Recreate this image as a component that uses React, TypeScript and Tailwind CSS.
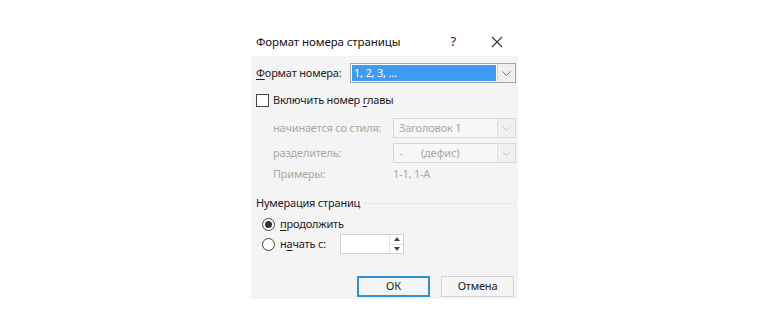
import React from 'react';

const font = { fontFamily: '"Noto Sans", "Open Sans", sans-serif' };

const Chevron: React.FC<{ color?: string }> = ({ color = '#7a7a7a' }) => (
  <svg width="9" height="5" viewBox="0 0 9 5" fill="none">
    <path d="M0.5 0.5 L4.5 4.5 L8.5 0.5" stroke={color} strokeWidth="1" />
  </svg>
);

const DisabledCombo: React.FC<{ children: React.ReactNode }> = ({ children }) => (
  <div className="flex h-[20px] w-[123px] flex-none items-stretch border border-[#d9d9d9] bg-[#f7f7f7]">
    <div className="flex flex-1 items-center whitespace-nowrap pl-[5px] text-[#a8a8a8]">{children}</div>
    <div className="flex w-[18px] items-center justify-center border-l border-[#e0e0e0] bg-[#f0f0f0]">
      <Chevron color="#c8c8c8" />
    </div>
  </div>
);

const Radio: React.FC<{ checked?: boolean }> = ({ checked }) => (
  <span className="flex h-[13px] w-[13px] flex-none items-center justify-center rounded-full border border-[#444] bg-white">
    {checked && <span className="h-[7px] w-[7px] rounded-full bg-[#333]" />}
  </span>
);

export default function App() {
  return (
    <div
      className="h-[330px] w-full whitespace-nowrap bg-white pl-[251px] pt-[28px] text-[11px] tracking-[-0.2px] text-[#222]"
      style={font}
    >
      <div className="w-[267px]">
        {/* Title bar */}
        <div className="flex h-[28px] items-center bg-white pl-[5px]">
          <span className="text-[11.5px] tracking-[-0.1px] text-[#111]">Формат номера страницы</span>
          <span className="ml-auto mr-[35px] text-[13px] text-[#222]">?</span>
          <svg width="12" height="12" viewBox="0 0 12 12" className="mr-[15px]">
            <path d="M1 1 L11 11 M11 1 L1 11" stroke="#333" strokeWidth="1.1" />
          </svg>
        </div>

        {/* Body */}
        <div className="flex flex-col bg-[#f4f4f4] pb-[2px] pl-[5px] pr-[2px] pt-[7px]">
          <div className="flex h-[20px] items-center">
            <span className="w-[94px] flex-none">
              <span className="underline underline-offset-2">Ф</span>ормат номера:
            </span>
            <div className="flex h-[20px] flex-1 items-stretch border border-[#a6a6a6] bg-white">
              <div className="m-[1px] flex flex-1 items-center bg-[#3d9cf2] pl-[2px] text-white">1, 2, 3, …</div>
              <div className="flex w-[18px] items-center justify-center border-l border-[#d0d0d0] bg-[#efefef]">
                <Chevron />
              </div>
            </div>
          </div>

          <div className="mt-[7px] flex h-[20px] items-center">
            <span className="h-[13px] w-[13px] flex-none border border-[#444] bg-white" />
            <span className="ml-[4px]">
              Включить номер <span className="underline underline-offset-2">г</span>лавы
            </span>
          </div>

          <div className="mt-[8px] flex h-[20px] items-center pl-[17px]">
            <span className="w-[120px] flex-none text-[#a8a8a8]">начинается со стиля:</span>
            <DisabledCombo>Заголовок 1</DisabledCombo>
          </div>

          <div className="mt-[5px] flex h-[20px] items-center pl-[17px]">
            <span className="w-[120px] flex-none text-[#a8a8a8]">разделитель:</span>
            <DisabledCombo>
              <span className="w-[22px]">-</span>(дефис)
            </DisabledCombo>
          </div>

          <div className="mt-[1px] flex h-[20px] items-center pl-[17px] text-[#a8a8a8]">
            <span className="w-[120px] flex-none">Примеры:</span>
            <span>1-1, 1-А</span>
          </div>

          <div className="mt-[9px] flex h-[20px] items-center">
            <span>Нумерация страниц</span>
            <span className="ml-[4px] h-px flex-1 bg-[#e8e8e8]" />
          </div>

          <div className="mt-[1px] flex h-[20px] items-center pl-[6px]">
            <Radio checked />
            <span className="ml-[5px]">
              <span className="underline underline-offset-2">п</span>родолжить
            </span>
          </div>

          <div className="flex h-[20px] items-center pl-[6px]">
            <Radio />
            <span className="ml-[5px] w-[60px] flex-none">
              н<span className="underline underline-offset-2">а</span>чать с:
            </span>
            <div className="flex h-[20px] w-[64px] flex-none items-stretch border border-[#cfcfcf] bg-white">
              <div className="flex-1" />
              <div className="flex w-[14px] flex-col border-l border-[#e0e0e0]">
                <div className="flex flex-1 items-center justify-center border-b border-[#e0e0e0]">
                  <svg width="6" height="4" viewBox="0 0 6 4">
                    <path d="M0 4 L3 0 L6 4 Z" fill="#444" />
                  </svg>
                </div>
                <div className="flex flex-1 items-center justify-center">
                  <svg width="6" height="4" viewBox="0 0 6 4">
                    <path d="M0 0 L6 0 L3 4 Z" fill="#444" />
                  </svg>
                </div>
              </div>
            </div>
          </div>

          <div className="mt-[22px] flex justify-end gap-[11px] pr-[2px]">
            <button className="flex h-[21px] w-[73px] items-center justify-center border-2 border-[#2f8fd8] bg-[#f5f5f5]">
              ОК
            </button>
            <button className="flex h-[21px] w-[73px] items-center justify-center border border-[#d4d4d4] bg-[#f5f5f5]">
              Отмена
            </button>
          </div>
        </div>
      </div>
    </div>
  );
}
